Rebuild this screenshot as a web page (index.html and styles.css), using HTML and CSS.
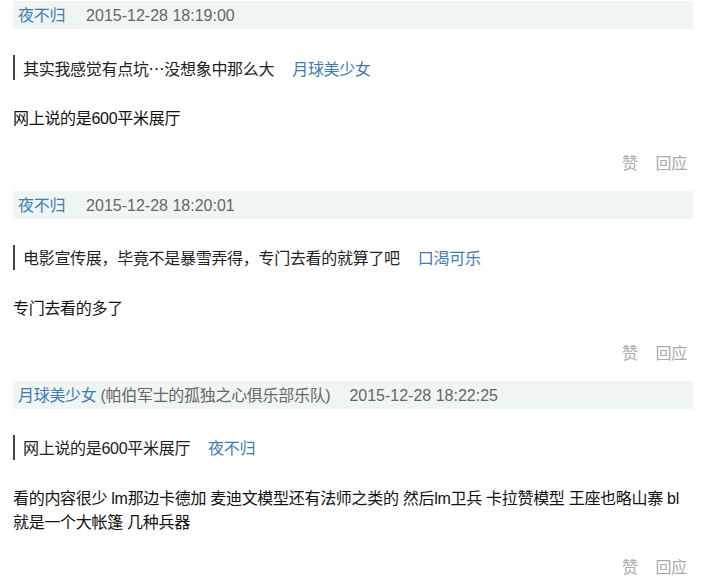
FILE: index.html
```html
<!DOCTYPE html>
<html lang="zh-CN">
<head>
<meta charset="utf-8">
<title>回应</title>
<link rel="stylesheet" href="styles.css">
</head>
<body>
<div class="comments">
  <div class="comment">
    <div class="meta"><a class="author" href="#">夜不归</a><span class="time">2015-12-28 18:19:00</span></div>
    <div class="quote"><span class="quote-text">其实我感觉有点坑<span class="cjk">…</span>没想象中那么大</span><a class="quote-author" href="#">月球美少女</a></div>
    <p class="body">网上说的是600平米展厅</p>
    <div class="actions"><a href="#">赞</a><a href="#">回应</a></div>
  </div>
  <div class="comment">
    <div class="meta"><a class="author" href="#">夜不归</a><span class="time">2015-12-28 18:20:01</span></div>
    <div class="quote"><span class="quote-text">电影宣传展，毕竟不是暴雪弄得，专门去看的就算了吧</span><a class="quote-author" href="#">口渴可乐</a></div>
    <p class="body">专门去看的多了</p>
    <div class="actions"><a href="#">赞</a><a href="#">回应</a></div>
  </div>
  <div class="comment">
    <div class="meta"><a class="author" href="#">月球美少女</a><span class="group">(帕伯军士的孤独之心俱乐部乐队)</span><span class="time">2015-12-28 18:22:25</span></div>
    <div class="quote"><span class="quote-text">网上说的是600平米展厅</span><a class="quote-author" href="#">夜不归</a></div>
    <p class="body">看的内容很少 lm那边卡德加 麦迪文模型还有法师之类的 然后lm卫兵 卡拉赞模型 王座也略山寨 bl就是一个大帐篷 几种兵器</p>
    <div class="actions"><a href="#">赞</a><a href="#">回应</a></div>
  </div>
</div>
</body>
</html>
```

FILE: styles.css
```css
html, body {
  margin: 0;
  padding: 0;
  background: #ffffff;
}

body {
  font-family: "Liberation Sans", "Noto Sans CJK SC", Arial, sans-serif;
  font-size: 16px;
  letter-spacing: -0.3px;
  color: #111111;
}

a {
  text-decoration: none;
}

.cjk {
  font-family: "Noto Sans CJK SC", sans-serif;
}

.comments {
  padding: 1px 13px 0 13px;
  display: flex;
  flex-direction: column;
}

.comment {
  display: flex;
  flex-direction: column;
  padding-bottom: 15px;
}

.meta {
  height: 28px;
  line-height: 30px;
  padding-left: 5px;
  background: #eff5f2;
  color: #666666;
  white-space: nowrap;
  overflow: hidden;
}

.meta .author {
  color: #3f7cae;
  margin-right: 21px;
}

.meta .time {
  letter-spacing: 0;
}

.meta .group {
  color: #666666;
  margin-left: -17px;
  margin-right: 19px;
}

.quote {
  margin-top: 26px;
  height: 25px;
  line-height: 27px;
  border-left: 2px solid #444444;
  padding-left: 8px;
  color: #222222;
}

.quote-author {
  color: #3f7cae;
  margin-left: 18px;
}

.body {
  margin: 27px 0 0 0;
  line-height: 24px;
  color: #111111;
}

.actions {
  margin-top: 21px;
  line-height: 24px;
  display: flex;
  justify-content: flex-end;
  gap: 18px;
  padding-right: 6px;
}

.actions a {
  color: #aaaaaa;
}
```
